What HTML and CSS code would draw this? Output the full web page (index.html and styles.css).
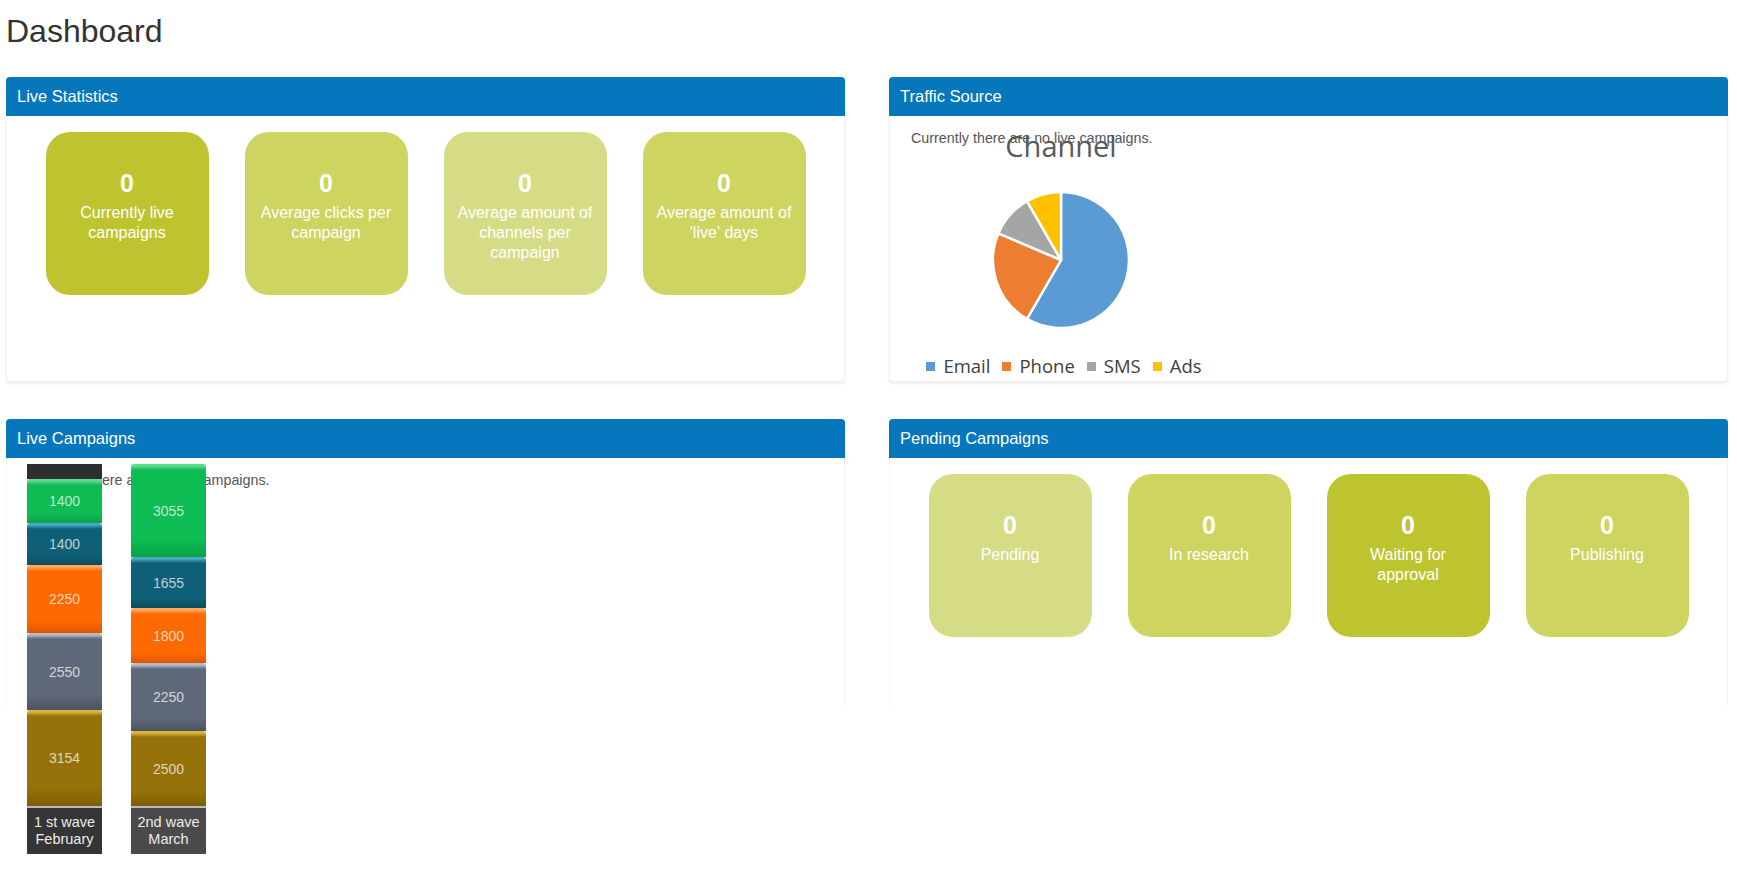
FILE: index.html
```html
<!DOCTYPE html>
<html>
<head>
<meta charset="utf-8">
<title>Dashboard</title>
<link rel="stylesheet" href="styles.css">
</head>
<body>
<div class="page">
  <h1 class="title">Dashboard</h1>
  <div class="grid">
    <section class="panel">
      <div class="panel-head">Live Statistics</div>
      <div class="panel-body cards">
        <div class="stat tone-dark"><div class="num">0</div><div class="lbl">Currently live<br>campaigns</div></div>
        <div class="stat tone-mid"><div class="num">0</div><div class="lbl">Average clicks per<br>campaign</div></div>
        <div class="stat tone-light"><div class="num">0</div><div class="lbl">Average amount of<br>channels per<br>campaign</div></div>
        <div class="stat tone-mid"><div class="num">0</div><div class="lbl">Average amount of<br>'live' days</div></div>
      </div>
    </section>

    <section class="panel">
      <div class="panel-head">Traffic Source</div>
      <div class="panel-body text"><p class="empty">Currently there are no live campaigns.</p></div>
      <div class="chart">
        <div class="chart-title">Channel</div>
        <svg class="pie" width="140" height="140" viewBox="0 0 140 140">
          <path d="M70,70 L70,2 A68,68 0 1,1 36,128.9 Z" fill="#5b9bd5" stroke="#fff" stroke-width="2.5" stroke-linejoin="round"/>
          <path d="M70,70 L36,128.9 A68,68 0 0,1 7.4,43.4 Z" fill="#ed7d31" stroke="#fff" stroke-width="2.5" stroke-linejoin="round"/>
          <path d="M70,70 L7.4,43.4 A68,68 0 0,1 36,11.1 Z" fill="#a5a5a5" stroke="#fff" stroke-width="2.5" stroke-linejoin="round"/>
          <path d="M70,70 L36,11.1 A68,68 0 0,1 70,2 Z" fill="#ffc000" stroke="#fff" stroke-width="2.5" stroke-linejoin="round"/>
        </svg>
        <div class="legend">
          <span class="key"><i class="sw sw-email"></i>Email</span>
          <span class="key"><i class="sw sw-phone"></i>Phone</span>
          <span class="key"><i class="sw sw-sms"></i>SMS</span>
          <span class="key"><i class="sw sw-ads"></i>Ads</span>
        </div>
      </div>
    </section>

    <section class="panel panel-cut">
      <div class="panel-head">Live Campaigns</div>
      <div class="panel-body text"><p class="empty">Currently there are no live campaigns.</p></div>
      <div class="bars">
        <div class="bar">
          <div class="seg seg-top" style="height:15px"></div>
          <div class="seg seg-green" style="height:44px">1400</div>
          <div class="seg seg-teal" style="height:42px">1400</div>
          <div class="seg seg-orange" style="height:68px">2250</div>
          <div class="seg seg-gray" style="height:77px">2550</div>
          <div class="seg seg-gold" style="height:96px">3154</div>
          <div class="bar-label label-dark">1 st wave<br>February</div>
        </div>
        <div class="bar">
          <div class="seg seg-green" style="height:93px">3055</div>
          <div class="seg seg-teal" style="height:51px">1655</div>
          <div class="seg seg-orange" style="height:55px">1800</div>
          <div class="seg seg-gray" style="height:68px">2250</div>
          <div class="seg seg-gold" style="height:75px">2500</div>
          <div class="bar-label label-mid">2nd wave<br>March</div>
        </div>
      </div>
    </section>

    <section class="panel panel-cut">
      <div class="panel-head">Pending Campaigns</div>
      <div class="panel-body cards">
        <div class="stat tone-light"><div class="num">0</div><div class="lbl">Pending</div></div>
        <div class="stat tone-mid"><div class="num">0</div><div class="lbl">In research</div></div>
        <div class="stat tone-dark"><div class="num">0</div><div class="lbl">Waiting for<br>approval</div></div>
        <div class="stat tone-mid"><div class="num">0</div><div class="lbl">Publishing</div></div>
      </div>
    </section>
  </div>
</div>
</body>
</html>
```
FILE: styles.css
```css
* { box-sizing: border-box; }
html, body { margin: 0; padding: 0; background: #fff; }
body { font-family: "Liberation Sans", Arial, sans-serif; color: #333; }

.page { padding: 13px 9px 0 6px; min-height: 884px; }

.title {
  margin: 0 0 27px 0;
  font-size: 32px;
  line-height: 37px;
  font-weight: normal;
  color: #333;
}

.grid {
  display: grid;
  grid-template-columns: 839px 839px;
  grid-template-rows: 305px 286px;
  column-gap: 44px;
  row-gap: 37px;
}

.panel {
  position: relative;
  background: #fff;
  border: 1px solid #f1f1f1;
  border-radius: 4px;
  box-shadow: 0 2px 3px rgba(0,0,0,0.07);
}
.panel-cut {
  border-bottom: none;
  box-shadow: none;
  border-radius: 4px 4px 0 0;
}

.panel-head {
  height: 39px;
  margin: -1px -1px 0 -1px;
  background: #0677bd;
  color: #fff;
  border-radius: 4px 4px 0 0;
  font-size: 16.5px;
  line-height: 39px;
  padding-left: 11px;
}

.panel-body.text { padding: 12px 21px; }
.empty {
  margin: 0;
  font-size: 14.3px;
  line-height: 20px;
  color: #555;
}

.panel-body.cards {
  display: flex;
  justify-content: center;
  gap: 36px;
  padding-top: 16px;
}

.stat {
  width: 163px;
  height: 163px;
  border-radius: 24px;
  color: #fff;
  text-align: center;
  padding: 33px 4px 0;
}
.tone-dark { background: #bec42f; }
.tone-mid { background: #cdd45f; }
.tone-light { background: #d6dc85; }

.num {
  font-size: 25px;
  font-weight: bold;
  line-height: 36px;
  margin-bottom: 2px;
}
.lbl {
  font-size: 16px;
  line-height: 20px;
  white-space: nowrap;
}

/* pie chart overlay */
.chart {
  position: absolute;
  left: 21px;
  top: 51px;
  width: 300px;
  display: flex;
  flex-direction: column;
  align-items: center;
}
.chart-title {
  font-family: "Open Sans", sans-serif;
  font-size: 29px;
  line-height: 34px;
  color: #595959;
}
.pie { margin-top: 27px; display: block; }
.legend {
  margin-top: 24px;
  margin-left: 6px;
  display: flex;
  gap: 12px;
  font-family: "Open Sans", sans-serif;
  font-size: 18.5px;
  line-height: 24px;
  color: #404040;
}
.key { display: flex; align-items: center; gap: 8px; }
.sw { display: block; width: 9px; height: 9px; }
.sw-email { background: #5b9bd5; }
.sw-phone { background: #ed7d31; }
.sw-sms { background: #a5a5a5; }
.sw-ads { background: #ffc000; }

/* stacked bars overlay */
.bars {
  position: absolute;
  z-index: 2;
  left: 20px;
  top: 44px;
  display: flex;
  align-items: flex-start;
  gap: 29px;
}
.bar { width: 75px; display: flex; flex-direction: column; flex-shrink: 0; }
.seg {
  flex-shrink: 0;
  display: flex;
  align-items: center;
  justify-content: center;
  font-size: 14px;
  color: rgba(255,255,255,0.72);
  border-radius: 3px 3px 0 0;
  background: linear-gradient(to bottom, var(--hi) 0, var(--hi) 2px, var(--base) 6px, var(--base) 80%, var(--lo) 100%);
}
.seg-top { background: #2e2e2e; border-radius: 0; }
.seg-green { --hi: #5edb91; --base: #0dbd54; --lo: #09a346; }
.seg-teal { --hi: #47a9c6; --base: #0f5f76; --lo: #0b4b5e; }
.seg-orange { --hi: #ffa860; --base: #ff6a00; --lo: #e35400; }
.seg-gray { --hi: #b3bdca; --base: #5f6879; --lo: #4b5363; }
.seg-gold { --hi: #dab53c; --base: #95730a; --lo: #7d5f00; }

.bar-label {
  flex-shrink: 0;
  height: 48px;
  border-top: 2px solid #bdbdbd;
  color: #ececec;
  text-align: center;
  font-size: 14.5px;
  line-height: 17px;
  padding-top: 6px;
}
.label-dark { background: #353535; }
.label-mid { background: #4a4a4a; }
```
